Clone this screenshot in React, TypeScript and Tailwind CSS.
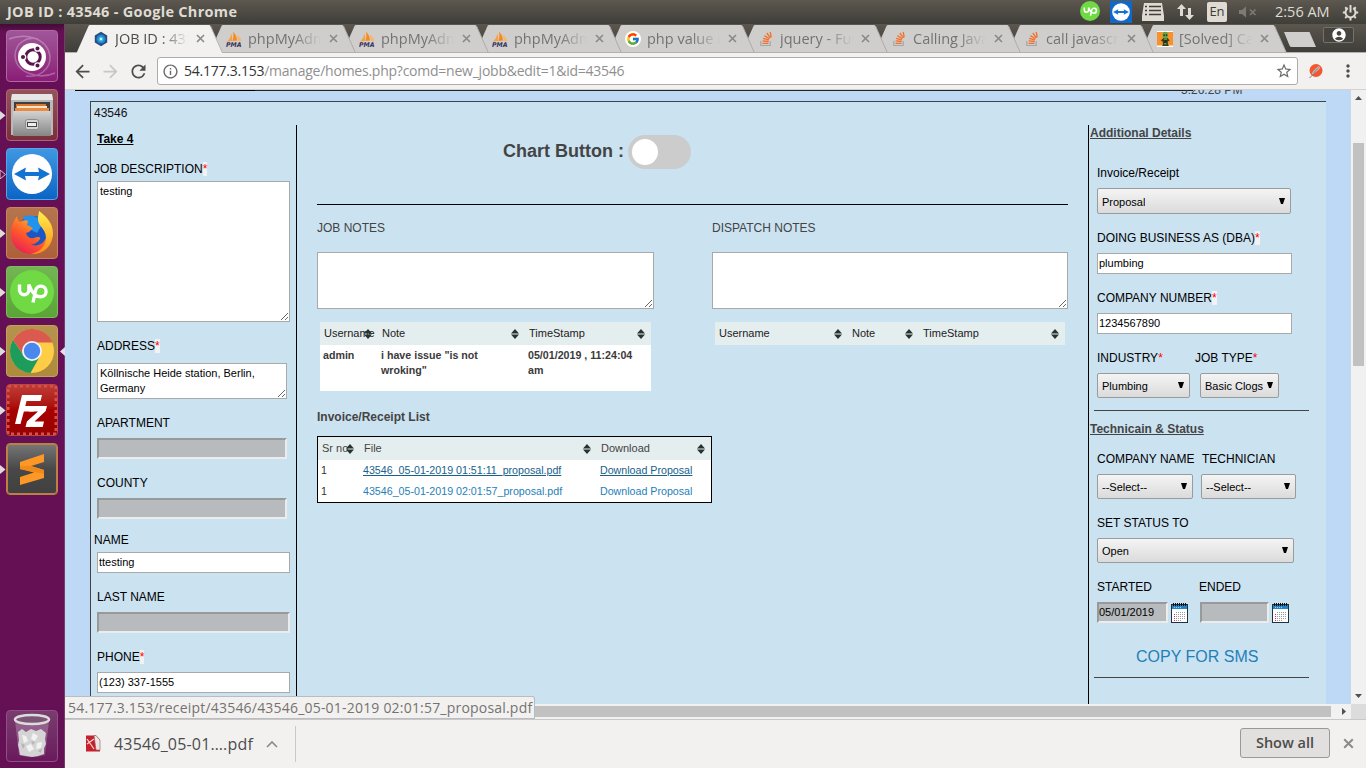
import type { ReactNode } from "react";
import {
  MdArrowBack,
  MdArrowForward,
  MdRefresh,
  MdInfoOutline,
  MdStarBorder,
  MdMoreVert,
  MdAccountCircle,
} from "react-icons/md";
import { FcGoogle } from "react-icons/fc";

/* ---------- favicons ---------- */

const HexIcon = () => (
  <svg width="16" height="16" viewBox="0 0 16 16">
    <path d="M8 .8 14.2 4.4v7.2L8 15.2 1.8 11.6V4.4Z" fill="#2b4a7c" />
    <circle cx="8" cy="8" r="4.6" fill="#1f86c9" />
    <circle cx="8" cy="8" r="2.6" fill="#39b5ee" />
    <circle cx="8" cy="8" r="1.2" fill="#d8f4ff" />
  </svg>
);

const PmaIcon = () => (
  <svg width="16" height="16" viewBox="0 0 16 16">
    <path d="M1 10.5C3.500 8.500 5 5 5.600 2L6.400 10Z" fill="#f7a043" />
    <path d="M6.600 10 C7.500 6 7.600 3 7 .8 9.500 3 11 6 11 9.600Z" fill="#f58b1f" />
    <path d="M11.400 9.800C11.600 7 11.500 5 10.800 3.200 13.500 5.500 15 8 15.500 10.200Z" fill="#f9b56a" />
    <text x="0" y="15.800" fontSize="6.500" fontWeight="700" fontStyle="italic" fontFamily="DejaVu Sans" fill="#34335f" textLength="15.500" lengthAdjust="spacingAndGlyphs">PMA</text>
  </svg>
);

const GIcon = () => (
  <span className="flex size-4 items-center justify-center rounded-full bg-white">
    <FcGoogle size={14} />
  </span>
);

const SoIcon = () => (
  <svg width="16" height="16" viewBox="0 0 16 16" fill="none">
    <path d="M2.800 10v4.500h9.400V10" stroke="#a5a6a8" strokeWidth="1.200" />
    <path d="M4.500 12.300h6M4.600 9.900l6 .6M5.100 7.300l5.800 1.600M6.400 4.600l5.100 3.100M8.800 2l3.600 4.800M12.200.8l1 5.600" stroke="#f1702a" strokeWidth="1.300" />
  </svg>
);

const SolvedIcon = () => (
  <svg width="16" height="16" viewBox="0 0 16 16">
    <path d="M0 0h16v16H0z" fill="#fff" />
    <path d="M0 1h16v13.500H0z" fill="#f8912b" />
    <ellipse cx="8.300" cy="4.200" rx="2.600" ry="3.400" fill="#5ba444" />
    <path d="M6.500 7h4l2.200 2.500-2 1 .3 3 1 1.500H5l1-1.500-.3-3-2-1Z" fill="#33421f" />
    <path d="M6.400 3.500h1.500v1.200H6.400zM8.800 3.500h1.500v1.200H8.800zM7.500 9.500h2v2h-2z" fill="#1c220f" />
    <path d="M7 7.500h3v1H7zM7.300 12.200h2v1h-2z" fill="#8fd064" />
  </svg>
);

/* ---------- tabs ---------- */

const tabs: { icon: ReactNode; title: string }[] = [
  { icon: <HexIcon />, title: "JOB ID : 43546" },
  { icon: <PmaIcon />, title: "phpMyAdmin" },
  { icon: <PmaIcon />, title: "phpMyAdmin" },
  { icon: <PmaIcon />, title: "phpMyAdmin" },
  { icon: <GIcon />, title: "php value in" },
  { icon: <SoIcon />, title: "jquery - Function" },
  { icon: <SoIcon />, title: "Calling JavaScript" },
  { icon: <SoIcon />, title: "call javascript" },
  { icon: <SolvedIcon />, title: "[Solved] Call" },
];

const CloseX = ({ size = 9, color = "#8b8987" }: { size?: number; color?: string }) => (
  <svg width={size} height={size} viewBox="0 0 9 9">
    <path d="M1 1 8 8M8 1 1 8" stroke={color} strokeWidth="1.600" />
  </svg>
);

const Tab = ({ icon, title, index }: { icon: ReactNode; title: string; index: number }) => {
  const active = index === 0;
  return (
    <div className="relative h-[29px] w-[133px] shrink-0" style={{ zIndex: 20 - index }}>
      <svg className="absolute top-0 left-0 overflow-visible" width="145" height="29">
        <path
          d={active ? "M0 29V28L11.500 2Q12 1 13 1H132Q133 1 133.500 2L145 28V29Z" : "M0 28 11.500 2Q12 1 13 1H132Q133 1 133.500 2L145 28Z"}
          fill={active ? "#f2f1f0" : "#d0cecd"}
        />
        <path d="M133.500 2 145.300 28.500" stroke={active ? "#b9b7b4" : "#aeacaa"} strokeWidth="1" fill="none" />
      </svg>
      <div className="relative flex h-[29px] items-center pl-4">
        <span className="flex w-[22px]">{icon}</span>
        <span
          className={
            "w-[73px] overflow-hidden font-['Open_Sans','Noto_Sans',sans-serif] text-[14.500px] leading-[20px] whitespace-nowrap [mask-image:linear-gradient(to_right,#000_62%,transparent)] " +
            (active ? "text-[#4c4c4c]" : "text-[#757371]")
          }
        >
          {title}
        </span>
        <span className="ml-2">
          <CloseX />
        </span>
      </div>
    </div>
  );
};

/* ---------- launcher ---------- */

const tileBase = "relative flex h-[52px] w-[52px] shrink-0 items-center justify-center rounded-[4px] border ";

const UbuntuLogo = () => (
  <svg width="50" height="50" viewBox="0 0 50 50">
    <g fill="none" stroke="#fff" strokeOpacity=".28" strokeWidth="1.500">
      <path d="M2 8C18 2 40 6 43 25c1 14-12 22-24 20M48 42C32 49 9 42 8 25 8 12 20 5 31 8" />
    </g>
    <circle cx="25" cy="26" r="14" fill="#fff" />
    <circle cx="26" cy="26" r="7.200" fill="none" stroke="#5b1450" strokeWidth="3" />
    <g stroke="#fff" strokeWidth="1.300" fill="#5b1450">
      <circle cx="16" cy="26" r="2.700" />
      <circle cx="30.500" cy="17.500" r="2.700" />
      <circle cx="30.500" cy="34.500" r="2.700" />
    </g>
  </svg>
);

const FilesLogo = () => (
  <svg width="50" height="50" viewBox="0 0 50 50">
    <defs>
      <linearGradient id="cab" x1="0" y1="0" x2="0" y2="1">
        <stop offset="0" stopColor="#d2d2d2" />
        <stop offset="1" stopColor="#858585" />
      </linearGradient>
    </defs>
    <path d="M5 4h40l1 7v34H4V11Z" fill="#b9b9b9" />
    <path d="M5 4h40l1 6H4Z" fill="#e6e6e6" />
    <path d="M7 12h36v10H7z" fill="#3f3f3f" />
    <path d="M9 14h30v7H9z" fill="#e0762c" />
    <path d="M10 16h30v2H10z" fill="#fbe6cb" />
    <path d="M8 18h34v4H8z" fill="#e98a3f" />
    <path d="M6 21h38v25H6z" fill="url(#cab)" />
    <rect x="18.500" y="29.500" width="13" height="10" rx="2" fill="#d4d4d4" stroke="#8a8a8a" />
    <rect x="20.500" y="32.500" width="9" height="4" fill="#eee" stroke="#454545" />
  </svg>
);

const TeamLogo = ({ size = 50 }: { size?: number }) => (
  <svg width={size} height={size} viewBox="0 0 50 50">
    <circle cx="25" cy="25" r="20" fill="#fff" />
    <path d="M7 25 19 18.500l-1 4.500h14l-1-4.500L43 25 31 31.500l1-4.500H18l1 4.500Z" fill="#1273d0" />
  </svg>
);

const FirefoxLogo = () => (
  <svg width="50" height="50" viewBox="0 0 50 50">
    <defs>
      <linearGradient id="fx" x1=".2" y1="1" x2=".8" y2="0">
        <stop offset="0" stopColor="#e8185c" />
        <stop offset=".45" stopColor="#ff5a2a" />
        <stop offset="1" stopColor="#ffc928" />
      </linearGradient>
      <linearGradient id="fy" x1="0" y1="0" x2="0" y2="1">
        <stop offset="0" stopColor="#fff04a" />
        <stop offset="1" stopColor="#ff8a1c" />
      </linearGradient>
    </defs>
    <circle cx="26" cy="24" r="16" fill="#1b56c4" />
    <path d="M16 9a16 16 0 0 1 20 6l-6 10-8-4Z" fill="#2193ec" />
    <path d="M10 8c0 3 1 5 3 6 3-2 6-2 8-1l-1 4 6 3-4 4-3 1c1 4 4 6 8 5 4-2 7-1 6 1-2 4-7 6-10 5 8 4 16-1 17-10 3 6 1 13-4 17C23 51 4 43 4 26 4 17 7 13 10 8Z" fill="url(#fx)" />
    <path d="M32 3c7 5 14 12 14 22 0 14-11 22-22 21 9-2 15-8 15-16 0-10-9-12-8-20 0-3 1-5 1-7Z" fill="url(#fy)" />
  </svg>
);

const UpMark = () => (
  <path d="M12.500 17.500V23a4.700 4.700 0 0 0 9.400 0v-5.500C23.500 22 26 26.500 29 28.300M26 35.500 28.600 23.500a5.300 5.300 0 1 1 5 6.200c-2 0-3.400-.5-4.600-1.400" fill="none" stroke="#fff" strokeWidth="3.400" />
);

const UpLogo = () => (
  <svg width="50" height="50" viewBox="0 0 50 50">
    <circle cx="25" cy="25" r="22" fill="#6fda44" />
    <UpMark />
  </svg>
);

const ChromeLogo = () => (
  <svg width="50" height="50" viewBox="0 0 50 50">
    <circle cx="25" cy="25" r="22" fill="#fdce45" />
    <path d="M6 14A22 22 0 0 1 45.500 16.500H25L16.500 29Z" fill="#da5a4f" />
    <path d="M6 14A22 22 0 0 0 23.500 47L33 30 17 30Z" fill="#1e9c5c" />
    <circle cx="25" cy="25" r="10" fill="#f3f3f3" />
    <circle cx="25" cy="25" r="8.200" fill="#4a87ee" />
  </svg>
);

const FzLogo = () => (
  <svg width="50" height="50" viewBox="0 0 50 50">
    <rect x="1" y="1" width="48" height="48" fill="none" stroke="#d0544e" strokeWidth="3" strokeDasharray="3 3" />
    <path d="M15 10h20l-1.500 6H19.500l-1.200 5H28l-1.300 5.500h-9.800L13.500 39H8Z" fill="#fff" />
    <path d="M23 21h17l-1.300 5L27.500 36.500H37L35.700 42H18.500l1.400-5.500L31 26.500h-9Z" fill="#fff" />
  </svg>
);

const SublimeLogo = () => (
  <svg className="shrink-0" width="50" height="50" viewBox="0 0 50 50">
    <path d="M13 18 37 10v8L24 22 37 26v8L13 41v-8L27 28.500 13 25Z" fill="#fd9826" />
    <path d="M24 22 37 26v4L13 25v-3Z" fill="#f08a1a" />
  </svg>
);

const TrashLogo = () => (
  <svg width="50" height="50" viewBox="0 0 50 50">
    <path d="M8 10h34l-4 34q-13 4-26 0Z" fill="#fff" fillOpacity=".22" />
    <path d="M11 21l4-3 4 3 5-3 5 2 5-2 5 4-1 6 1 5-2 4 0 6-6 2-6 1-6-1-6-1-1-6-1-4 1-5Z" fill="#d4d4d4" />
    <path d="M15 24l4 1 2 5-4 2ZM26 22l5 3-3 5-4-2ZM19 35l5-2 3 5-5 3ZM30 32l5-1-1 6-5 1Z" fill="#f2f2f2" />
    <path d="M14 32l4 2-2 4ZM31 40l4-3-1 5ZM24 30l4 1-2 3Z" fill="#b4b4b4" />
    <ellipse cx="25" cy="8.500" rx="17" ry="4.500" fill="#7b5573" stroke="#dcdcdc" strokeWidth="2.500" />
  </svg>
);

const LeftPip = ({ hollow = false }: { hollow?: boolean }) => (
  <svg className="absolute top-[21px] left-[-7px]" width="6" height="9" viewBox="0 0 6 9">
    <path d="M0 0 5.500 4.500 0 9Z" fill={hollow ? "none" : "#dedbdb"} stroke={hollow ? "#cfc3cc" : "none"} />
  </svg>
);

const Launcher = () => (
  <aside className="flex w-[65px] shrink-0 flex-col border-r border-[#7a3a6c] bg-[#651054] bg-[linear-gradient(#430b38,#651054_8px)] pt-[6px] pb-[6px] pl-[6px]">
    <div className="flex grow flex-col gap-[7px]">
      <div className={tileBase + "border-[#b266a4] bg-linear-to-b from-[#a0569a] to-[#8b1c77]"}><UbuntuLogo /></div>
      <div className={tileBase + "border-[#a76a73] bg-linear-to-b from-[#96525c] to-[#7b2d3c]"}><FilesLogo /><LeftPip /></div>
      <div className={tileBase + "border-[#5aa4e6] bg-linear-to-b from-[#3f97e2] to-[#0a65c6]"}><TeamLogo /><LeftPip hollow /></div>
      <div className={tileBase + "border-[#c5875f] bg-linear-to-b from-[#b5754f] to-[#ad6039]"}><FirefoxLogo /><LeftPip /></div>
      <div className={tileBase + "border-[#7dbc5c] bg-linear-to-b from-[#73b553] to-[#5aa437]"}><UpLogo /><LeftPip /></div>
      <div className={tileBase + "border-[#c3a25c] bg-linear-to-b from-[#b6934d] to-[#ae8a3c]"}>
        <ChromeLogo /><LeftPip />
        <svg className="absolute top-[21px] left-[52px]" width="6" height="9" viewBox="0 0 6 9">
          <path d="M6 0 1 4.500 6 9Z" fill="#e5dfe3" />
        </svg>
      </div>
      <div className={tileBase + "border-[#c2433d] bg-linear-to-b from-[#bf3a36] via-[#a80000] to-[#970303]"}><FzLogo /><LeftPip /></div>
      <div className={tileBase + "border-[#bc8045] bg-linear-to-b from-[#777] via-[#484848] to-[#404040] inset-ring inset-ring-[#bc8045]"}><SublimeLogo /><LeftPip /></div>
    </div>
    <div className={tileBase + "border-[#8d5082] bg-linear-to-b from-[#7a3c70] to-[#6a195c]"}><TrashLogo /></div>
  </aside>
);

/* ---------- form pieces ---------- */

const Label = ({ children, className = "" }: { children: ReactNode; className?: string }) => (
  <div className={"h-4 text-[12px] leading-4 whitespace-nowrap text-black " + className}>{children}</div>
);

const Star = ({ plain = false }: { plain?: boolean }) => (
  <span className={"mt-px inline-block h-[14px] align-top leading-[14px] text-[#ff0000] " + (plain ? "" : "bg-[#f2f2f2]")}>*</span>
);

const Field = ({ value = "", className = "" }: { value?: string; className?: string }) => (
  <input defaultValue={value} className={"block h-[21px] border border-[#a9a9a9] bg-white px-px pb-px text-[11px] text-black " + className} />
);

const Inset = ({ value = "", className = "" }: { value?: string; className?: string }) => (
  <input
    defaultValue={value}
    className={"block h-[21px] border-2 border-t-[#999] border-r-[#ececec] border-b-[#ececec] border-l-[#999] bg-[#b8bbbd] pb-px text-[11px] text-black " + className}
  />
);

const Area = ({ value = "", className = "" }: { value?: string; className?: string }) => (
  <textarea defaultValue={value} className={"block border border-[#a9a9a9] bg-white p-[2px] text-[11px] leading-[15px] text-black " + className} />
);

const Select = ({ value, className = "" }: { value: string; className?: string }) => (
  <div className={"flex h-[25px] items-center justify-between rounded-[2px] border border-[#9b9b9b] bg-linear-to-b from-[#f4f4f4] to-[#dbdbdb] pr-[5px] pl-1 text-[11px] text-black " + className}>
    <span className="mt-[2px] overflow-hidden whitespace-nowrap">{value}</span>
    <svg className="-mt-px shrink-0" width="6" height="6" viewBox="0 0 6 6"><path d="M0 0H6L4 6H2Z" fill="#000" /></svg>
  </div>
);

const SortIcon = () => (
  <svg className="absolute top-[7px] right-[6px]" width="8" height="10" viewBox="0 0 8 10">
    <path d="M4 0 8 4.500H0ZM0 5.500H8L4 10Z" fill="#263330" />
  </svg>
);

const Th = ({ children, className }: { children: ReactNode; className: string }) => (
  <div className={"relative h-[23px] pl-1 text-[11px] leading-[23px] whitespace-nowrap " + className}>
    {children}
    <SortIcon />
  </div>
);

const Calendar = () => (
  <svg className="mt-px ml-[3px]" width="17" height="20" viewBox="0 0 17 20" shapeRendering="crispEdges">
    <rect x=".5" y="1.500" width="16" height="18" fill="#fff" stroke="#22303c" />
    <path d="M1 2h15v4H1z" fill="#2385c9" />
    <path d="M3 4.500h8" stroke="#9ed0ee" strokeDasharray="1 1" />
    <path d="M2 1.500h14" stroke="#111" strokeWidth="3" strokeDasharray="1 1" />
    <path d="M5 9.500h10M5 11.500h10M5 13.500h10M5 15.500h10M5 17.500h6" stroke="#999" strokeDasharray="1 1" />
    <path d="M3 11.500h1M3 13.500h1M3 15.500h1M3 17.500h1" stroke="#e0246b" />
  </svg>
);

/* ---------- page columns ---------- */

const LeftColumn = () => (
  <section className="w-[206px] shrink-0 border-r border-black pl-[6px]">
    <Label className="mt-[6px] font-bold underline">Take 4</Label>
    <Label className="mt-[14px] -ml-[3px]">JOB DESCRIPTION<Star /></Label>
    <Area value="testing" className="mt-1 h-[141px] w-[193px]" />
    <Label className="mt-4">ADDRESS<Star /></Label>
    <Area value="Köllnische Heide station, Berlin, Germany" className="mt-[9px] h-9 w-[190px] overflow-hidden" />
    <Label className="mt-4">APARTMENT</Label>
    <Inset className="mt-[7px] w-[190px]" />
    <Label className="mt-4">COUNTY</Label>
    <Inset className="mt-[7px] w-[190px]" />
    <Label className="mt-[13px] -ml-[3px]">NAME</Label>
    <Field value="ttesting" className="mt-1 w-[193px]" />
    <Label className="mt-4">LAST NAME</Label>
    <Inset className="mt-[7px] w-[193px]" />
    <Label className="mt-4">PHONE<Star /></Label>
    <Field value="(123) 337-1555" className="mt-[7px] w-[193px]" />
  </section>
);

const MiddleColumn = () => (
  <section className="w-[791px] shrink-0 pl-5 text-[#444]">
    <div className="flex pt-[10px] pl-[186px]">
      <div className="h-[34px] w-[125px] text-[18px] leading-[33px] font-bold whitespace-nowrap">Chart Button :</div>
      <div className="h-[34px] w-[63px] rounded-full bg-[#ccc] p-1">
        <div className="size-[26px] rounded-full bg-white" />
      </div>
    </div>
    <div className="mt-[35px] h-px w-[751px] bg-black" />
    <div className="mt-[15px] flex">
      <div className="w-[395px]">
        <Label className="text-[#444]!">JOB NOTES</Label>
        <Area className="mt-4 h-[57px] w-[337px]" />
        <div className="mt-[13px] ml-[3px] w-[331px]">
          <div className="flex bg-[#e5eeee] text-[#222]">
            <Th className="w-[58px]">Username</Th>
            <Th className="w-[147px]">Note</Th>
            <Th className="w-[126px]">TimeStamp</Th>
          </div>
          <div className="flex h-[46px] bg-white pt-[3px] text-[10.670px] leading-[15px] font-bold text-[#3a3a3a]">
            <div className="w-[58px] pl-[3px]">admin</div>
            <div className="w-[147px] pr-8 pl-[3px]">i have issue "is not wroking"</div>
            <div className="w-[126px] pr-3 pl-[3px]">05/01/2019 , 11:24:04 am</div>
          </div>
        </div>
      </div>
      <div>
        <Label className="text-[#444]!">DISPATCH NOTES</Label>
        <Area className="mt-4 h-[57px] w-[356px]" />
        <div className="mt-[13px] ml-[3px] flex w-[350px] bg-[#e5eeee] text-[#222]">
          <Th className="w-[133px]">Username</Th>
          <Th className="w-[71px]">Note</Th>
          <Th className="w-[146px]">TimeStamp</Th>
        </div>
      </div>
    </div>
    <div className="mt-[18px] h-4 text-[12px] leading-4 font-bold">Invoice/Receipt List</div>
    <div className="mt-[11px] w-[395px] border border-black bg-white text-[10.670px]">
      <div className="flex bg-[#e5eeee]">
        <Th className="w-[42px]">Sr no</Th>
        <Th className="w-[237px]">File</Th>
        <Th className="w-[114px]">Download</Th>
      </div>
      <div className="flex h-[21px] leading-[20px] text-[#17618c]">
        <span className="w-[42px] pl-[3px] text-[#333]">1</span>
        <span className="w-[237px] pl-[3px] underline">43546_05-01-2019 01:51:11_proposal.pdf</span>
        <span className="pl-[3px] underline">Download Proposal</span>
      </div>
      <div className="flex h-[21px] leading-[20px] text-[#1f80b8]">
        <span className="w-[42px] pl-[3px] text-[#333]">1</span>
        <span className="w-[237px] pl-[3px]">43546_05-01-2019 02:01:57_proposal.pdf</span>
        <span className="pl-[3px]">Download Proposal</span>
      </div>
    </div>
  </section>
);

const RightColumn = () => (
  <section className="grow border-l border-black pl-2">
    <Label className="-ml-[7px] font-bold text-[#444]! underline">Additional Details</Label>
    <Label className="mt-6">Invoice/Receipt</Label>
    <Select value="Proposal" className="mt-[7px] h-[26px]! w-[194px]" />
    <Label className="mt-4">DOING BUSINESS AS (DBA)<Star /></Label>
    <Field value="plumbing" className="mt-[7px] w-[195px]" />
    <Label className="mt-4">COMPANY NUMBER<Star /></Label>
    <Field value="1234567890" className="mt-[7px] w-[195px]" />
    <div className="mt-4 flex">
      <Label className="w-[98px]">INDUSTRY<Star plain /></Label>
      <Label>JOB TYPE<Star plain /></Label>
    </div>
    <div className="mt-[7px] flex gap-[10px]">
      <Select value="Plumbing" className="w-[93px]" />
      <Select value="Basic Clogs" className="w-[79px]" />
    </div>
    <div className="mt-3 -ml-[3px] h-px w-[215px] bg-[#444]" />
    <Label className="mt-[10px] -ml-[7px] font-bold text-[#444]! underline">Technicain &amp; Status</Label>
    <div className="mt-[14px] flex">
      <Label className="w-[105px]">COMPANY NAME</Label>
      <Label>TECHNICIAN</Label>
    </div>
    <div className="mt-[7px] flex gap-2">
      <Select value="--Select--" className="w-[96px]" />
      <Select value="--Select--" className="w-[95px]" />
    </div>
    <Label className="mt-4">SET STATUS TO</Label>
    <Select value="Open" className="mt-[7px] w-[197px]" />
    <div className="mt-4 flex">
      <Label className="w-[102px]">STARTED</Label>
      <Label>ENDED</Label>
    </div>
    <div className="mt-[7px] flex">
      <Inset value="05/01/2019" className="w-[71px]" />
      <Calendar />
      <Inset className="ml-3 w-[69px]" />
      <Calendar />
    </div>
    <div className="mt-6 ml-[39px] h-5 text-[16px] leading-5 text-[#1f80b8]">COPY FOR SMS</div>
    <div className="mt-[10px] -ml-[3px] h-px w-[215px] bg-[#444]" />
  </section>
);

/* ---------- window ---------- */

const TopBar = () => (
  <header className="flex h-6 shrink-0 items-center bg-linear-to-b from-[#5d5850] to-[#3f3e39] pl-[7px] font-['Open_Sans','Noto_Sans',sans-serif] text-[#dfdbd2]">
    <div className="grow text-[14.500px] tracking-[0.300px] font-bold">JOB ID : 43546 - Google Chrome</div>
    <svg width="20" height="20" viewBox="3 3 44 44" className="mb-[2px]">
      <circle cx="25" cy="25" r="22" fill="#6fda44" />
      <UpMark />
    </svg>
    <span className="ml-[10px] flex h-[22px] w-[22px] items-center justify-center bg-[#1068c8]"><TeamLogo size={22} /></span>
    <svg className="ml-[10px]" width="22" height="20" viewBox="0 0 22 20">
      <path d="M2 1h18l2 13v5H0v-5Z" fill="#dfdbd2" />
      <path d="M3 4.500h2M3 8.500h2M3 12.500h2M7 4.500h12M7 8.500h12M7 12.500h12" stroke="#403e3a" strokeWidth="1.400" />
    </svg>
    <svg className="ml-3" width="19" height="18" viewBox="0 0 19 18" fill="#dfdbd2">
      <path d="M5.500 1 10 6H7v7H4V6H1ZM13.500 17 9 12h3V5h3v7h3Z" />
    </svg>
    <span className="ml-3 flex h-5 w-5 items-center justify-center rounded-[2px] bg-[#dfdbd2] text-[13px] text-[#3c3b37]">En</span>
    <svg className="ml-3" width="18" height="12" viewBox="0 0 18 12">
      <path d="M0 4h3l4-3.500v11L3 8H0Z" fill="#7f7b74" />
      <path d="M11 3.500l5.500 5.500M16.500 3.500 11 9" stroke="#7f7b74" strokeWidth="1.500" />
    </svg>
    <span className="ml-[18px] w-[56px] -mt-px text-[14.500px] whitespace-nowrap">2:56 AM</span>
    <svg className="mr-[7px] ml-[11px]" width="17" height="17" viewBox="0 0 17 17" fill="none" stroke="#dfdbd2">
      <path d="M5.800 4.200a5 5 0 1 0 5.400 0" strokeWidth="2" />
      <path d="M8.500 1v7.500" strokeWidth="2" />
      <path d="M3.200 3.200 4.800 4.800M13.800 3.200 12.200 4.800M.8 8.500H3.500M13.500 8.500H16.200M3.200 14l1.600-1.600M13.800 14l-1.600-1.600M8.500 13.500V16.500" strokeWidth="2" />
    </svg>
  </header>
);

const Toolbar = () => (
  <div className="flex h-[37px] shrink-0 items-center border-b border-[#d3d1cf] bg-[#f2f1f0] pl-[7px] text-[#4d4d4d]">
    <MdArrowBack size={21} />
    <MdArrowForward size={21} className="ml-[7px] text-[#c8c7c5]" />
    <MdRefresh size={21} className="ml-[7px]" />
    <div className="ml-2 flex h-7 w-[1141px] items-center rounded-[3px] border border-[#aeacaa] bg-white pr-[4px] pl-1">
      <MdInfoOutline size={17} className="text-[#6b6b6b]" />
      <span className="-mt-px ml-[5px] grow font-['Open_Sans','Noto_Sans',sans-serif] text-[14px] tracking-[-0.240px] whitespace-nowrap text-[#8f8f8f]">
        <span className="text-[#333]">54.177.3.153</span>/manage/homes.php?comd=new_jobb&amp;edit=1&amp;id=43546
      </span>
      <MdStarBorder size={18} className="text-[#6b6b6b]" />
    </div>
    <svg className="ml-[10px]" width="16" height="16" viewBox="0 0 16 16">
      <circle cx="8" cy="7.500" r="6.500" fill="#f4572d" />
      <path d="M4 11 6 7.500 10.500 3.500l1.500 1-1 1.500-4.500 4Z" fill="#9aa3aa" stroke="#e6ddd9" strokeWidth=".5" />
      <path d="M1.500 15 8 8.500" stroke="#7a8288" />
    </svg>
    <MdMoreVert size={20} className="ml-[14px]" />
  </div>
);

export default function App() {
  return (
    <div className="flex h-[768px] w-[1366px] flex-col overflow-hidden font-['Liberation_Sans',Arial,sans-serif]">
      <TopBar />
      <div className="flex min-h-0 grow">
        <Launcher />
        <div className="relative flex w-[1301px] flex-col">
          <div className="isolate flex h-[29px] shrink-0 border-b border-[#b3b1af] bg-linear-to-b from-[#5b564e] to-[#3f3e39] pl-3">
            {tabs.map((t, i) => (
              <Tab key={i} index={i} icon={t.icon} title={t.title} />
            ))}
            <svg className="mt-2 ml-[10px]" width="33" height="15" viewBox="0 0 33 15">
              <path d="M0 0H25.500L32 15H8Q6 15 5.500 13.500Z" fill="#d0cecd" />
            </svg>
            <span className="mt-[3px] ml-[6px] flex h-4 w-[31px] items-center justify-center rounded-[2px] border border-[#75726b] bg-[#46443f] text-white">
              <MdAccountCircle size={16} />
            </span>
          </div>
          <Toolbar />

          <div className="flex h-[614px] shrink-0">
            <main className="h-[614px] w-[1286px] overflow-hidden bg-[#bed9f5]">
              <div className="flex h-[11px] overflow-hidden pl-[10px]">
                <div className="h-px w-[180px] bg-black" />
                <div className="h-px w-[938px] bg-[#222]" />
                <div className="-mt-[7px] -ml-[12px] text-[12px] leading-[14px] text-[#444]">5:26:28 PM</div>
              </div>
              <div className="ml-[25px] h-[640px] w-[1236px] border-t border-l border-[#3d454b] bg-[#cbe2f1]">
                <div className="h-[23px] pt-[3px] pl-[3px] text-[12px] leading-4 text-[#111]">43546</div>
                <div className="flex h-[616px]">
                  <LeftColumn />
                  <MiddleColumn />
                  <RightColumn />
                </div>
              </div>
            </main>
            <div className="flex w-[15px] flex-col items-center bg-[#f1f1f1] pt-[6px] pb-[6px]">
              <svg width="7" height="4"><path d="M0 4 3.500 0 7 4Z" fill="#505050" /></svg>
              <div className="mt-[43px] h-[223px] w-[11px] bg-[#c1c1c1]" />
              <svg className="mt-auto" width="7" height="4"><path d="M0 0H7L3.500 4Z" fill="#505050" /></svg>
            </div>
          </div>

          <div className="flex h-[15px] shrink-0 items-center bg-[#f1f1f1]">
            <div className="h-[11px] w-[1266px] bg-[#c1c1c1]" />
            <svg className="ml-[11px]" width="4" height="7"><path d="M0 0 4 3.500 0 7Z" fill="#505050" /></svg>
            <div className="ml-auto h-[15px] w-[15px] bg-[#dcdcdc]" />
          </div>

          <footer className="flex grow items-center border-t border-[#c9c8c6] bg-[#f2f1f0] pl-5 font-['Open_Sans','Noto_Sans',sans-serif] text-[#4c4c4c]">
            <svg className="mb-[2px]" width="16" height="17" viewBox="0 0 16 17">
              <path d="M1 .5H11L15 5V16.500H1Z" fill="#c5202c" />
              <path d="M9 .5h2L15 5v10h-4Z" fill="#e9e6e4" stroke="#9a5252" strokeWidth=".6" />
              <path d="M2 4 9 14M2 9 9 4" stroke="#f6d5d5" strokeWidth="1.200" fill="none" />
            </svg>
            <span className="ml-[13px] w-[140px] text-[16px] tracking-[0.180px] whitespace-nowrap">43546_05-01….pdf</span>
            <svg className="ml-[12px]" width="12" height="7" viewBox="0 0 12 7" fill="none">
              <path d="M1 6 6 1l5 5" stroke="#8b8987" strokeWidth="1.600" />
            </svg>
            <div className="ml-[17px] h-9 w-px bg-[#c9c8c6]" />
            <div className="-mt-[2px] ml-auto flex h-[30px] w-[90px] items-center justify-center rounded-[3px] border border-[#9b9895] bg-[#e2e0de] text-[14.500px] font-semibold">Show all</div>
            <span className="mr-3 mb-[2px] ml-[13px]"><CloseX size={11} /></span>
          </footer>

          <div className="absolute top-[672px] left-0 h-[23px] w-[470px] rounded-tr-[3px] border border-l-0 border-[#b9bcc0] bg-[#f2f1f0] pl-[3px] font-['Open_Sans','Noto_Sans',sans-serif] text-[14px] leading-[22px] tracking-[0.200px] whitespace-nowrap text-[#757371]">
            54.177.3.153/receipt/43546/43546_05-01-2019 02:01:57_proposal.pdf
          </div>
        </div>
      </div>
    </div>
  );
}
